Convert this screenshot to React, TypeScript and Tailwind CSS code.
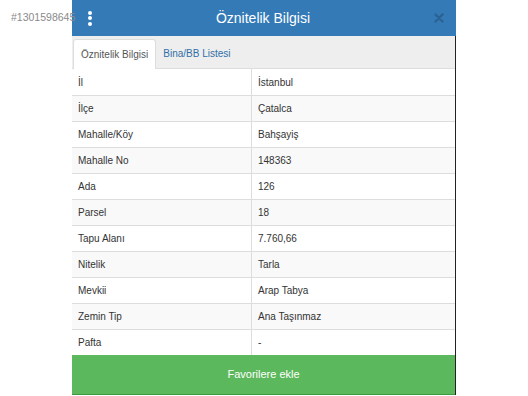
const rows = [
  ["İl", "İstanbul"],
  ["İlçe", "Çatalca"],
  ["Mahalle/Köy", "Bahşayiş"],
  ["Mahalle No", "148363"],
  ["Ada", "126"],
  ["Parsel", "18"],
  ["Tapu Alanı", "7.760,66"],
  ["Nitelik", "Tarla"],
  ["Mevkii", "Arap Tabya"],
  ["Zemin Tip", "Ana Taşınmaz"],
  ["Pafta", "-"],
];

export default function App() {
  return (
    <div className="relative w-[528px] h-[396px] overflow-hidden bg-white font-['Liberation_Sans',Arial,sans-serif]">
      <div className="relative ml-[72px] flex w-[384px] flex-col">
        {/* header */}
        <div className="flex h-[36px] items-center justify-between bg-[#337ab7] pl-[16px] pr-[12px]">
          <div className="flex flex-col gap-[1.5px]">
            <span className="h-[4px] w-[4px] rounded-full bg-white" />
            <span className="h-[4px] w-[4px] rounded-full bg-white" />
            <span className="h-[4px] w-[4px] rounded-full bg-white" />
          </div>
          <span className="text-[14px] text-white">Öznitelik Bilgisi</span>
          <svg width="10" height="10" viewBox="0 0 10 10">
            <path d="M1.5 1.5 L8.5 8.5 M8.5 1.5 L1.5 8.5" stroke="#2b6193" strokeWidth="2.4" strokeLinecap="round" />
          </svg>
        </div>

        <div className="flex flex-col border-r border-[#222]">
          {/* tabs */}
          <div className="flex h-[33px] items-end border-b border-[#ddd] bg-[#eee] pl-[1px]">
            <div className="-mb-px flex h-[30px] items-center rounded-t-[3px] border border-b-0 border-[#ddd] bg-white px-[7px] text-[10px] text-[#555]">
              Öznitelik Bilgisi
            </div>
            <div className="flex h-[30px] items-center px-[7px] text-[10px] text-[#2f6ea8]">
              Bina/BB Listesi
            </div>
          </div>

          {/* attribute table */}
          <div className="flex flex-col">
            {rows.map(([label, value], i) => (
              <div
                key={label}
                className={`grid h-[26px] grid-cols-[180px_1fr] text-[10px] text-[#333] ${
                  i > 0 ? "border-t border-[#ddd]" : ""
                } ${i % 2 === 1 ? "bg-[#f9f9f9]" : "bg-white"}`}
              >
                <div className="flex items-center border-r border-[#ddd] pl-[6px]">{label}</div>
                <div className="flex items-center pl-[6px]">{value}</div>
              </div>
            ))}
          </div>

          <button className="flex h-[40px] items-center justify-center border-b border-[#3f9a3f] bg-[#5cb85c] text-[11px] text-white">
            Favorilere ekle
          </button>
        </div>
      </div>

      {/* listing id, its last digit runs onto the modal edge */}
      <span className="absolute left-[11px] top-[10px] text-[10.5px] leading-[14px] text-[#8a8a8a]">
        #1301598645
      </span>
    </div>
  );
}
